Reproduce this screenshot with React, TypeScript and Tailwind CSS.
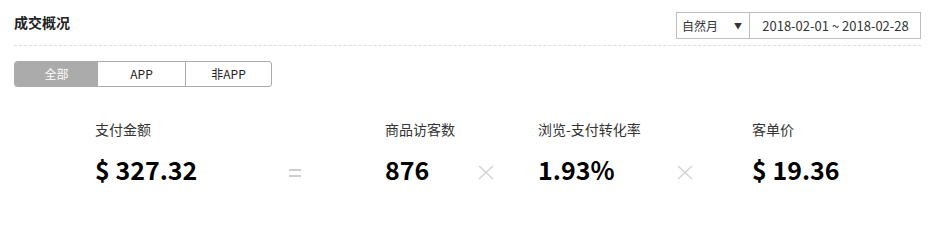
import React from "react";

const font = { fontFamily: '"Noto Sans CJK SC", "Noto Sans", sans-serif' };

const Equals = () => (
    <svg width="12" height="9" viewBox="0 0 12 9" className="block">
        <rect x="0" y="0" width="12" height="2" fill="#cfcfcf" />
        <rect x="0" y="6" width="12" height="2" fill="#cfcfcf" />
    </svg>
);

const Times = () => (
    <svg width="16" height="15" viewBox="0 0 16 15" className="block">
        <path d="M1 1L15 14M15 1L1 14" stroke="#d2d6d4" strokeWidth={1.6} fill="none" />
    </svg>
);

interface MetricProps {
    label: string;
    value: string;
    className?: string;
}

const Metric: React.FC<MetricProps> = ({ label, value, className }) => (
    <div className={className}>
        <div className="text-[14px] leading-[20px] text-[#333]">{label}</div>
        <div className="mt-[14px] text-[25px] leading-[32px] font-bold text-black whitespace-nowrap">{value}</div>
    </div>
);

export default function App() {
    return (
        <div className="w-[936px] h-[205px] bg-white px-[14px] pt-[12px] pr-[15px]" style={font}>
            {/* header */}
            <div className="flex justify-between items-start h-[34px] border-b border-dashed border-[#dedede]">
                <h2 className="mt-[1px] text-[14px] leading-[18px] font-bold text-[#222]">成交概况</h2>
                <div className="flex h-[27px] border border-[#bdbdbd] text-[#333]">
                    <div className="w-[73px] flex items-center justify-between pl-[5px] pr-[7px] border-r border-[#bdbdbd] text-[12px]">
                        <span>自然月</span>
                        <span className="text-[8px] leading-none">▼</span>
                    </div>
                    <div className="w-[170px] flex items-center justify-center pl-[1px] text-[13px]">2018-02-01 ~ 2018-02-28</div>
                </div>
            </div>

            {/* tabs */}
            <div className="mt-[15px] flex h-[26px] w-[258px] border border-[#aaa] rounded-[3px] overflow-hidden text-[12px]">
                <button className="w-[83px] bg-[#ababab] text-white">全部</button>
                <button className="w-[88px] border-r border-[#aaa] text-[#222]">APP</button>
                <button className="flex-1 text-[#222]">非APP</button>
            </div>

            {/* metrics */}
            <div className="mt-[32px] pl-[81px] flex items-start">
                <Metric label="支付金额" value="$ 327.32" className="w-[194px]" />
                <div className="mt-[50px] w-[12px]"><Equals /></div>
                <Metric label="商品访客数" value="876" className="ml-[84px] w-[93px]" />
                <div className="mt-[46px] w-[16px]"><Times /></div>
                <Metric label="浏览-支付转化率" value="1.93%" className="ml-[44px] w-[139px]" />
                <div className="mt-[46px] w-[16px]"><Times /></div>
                <Metric label="客单价" value="$ 19.36" className="ml-[59px]" />
            </div>
        </div>
    );
}
